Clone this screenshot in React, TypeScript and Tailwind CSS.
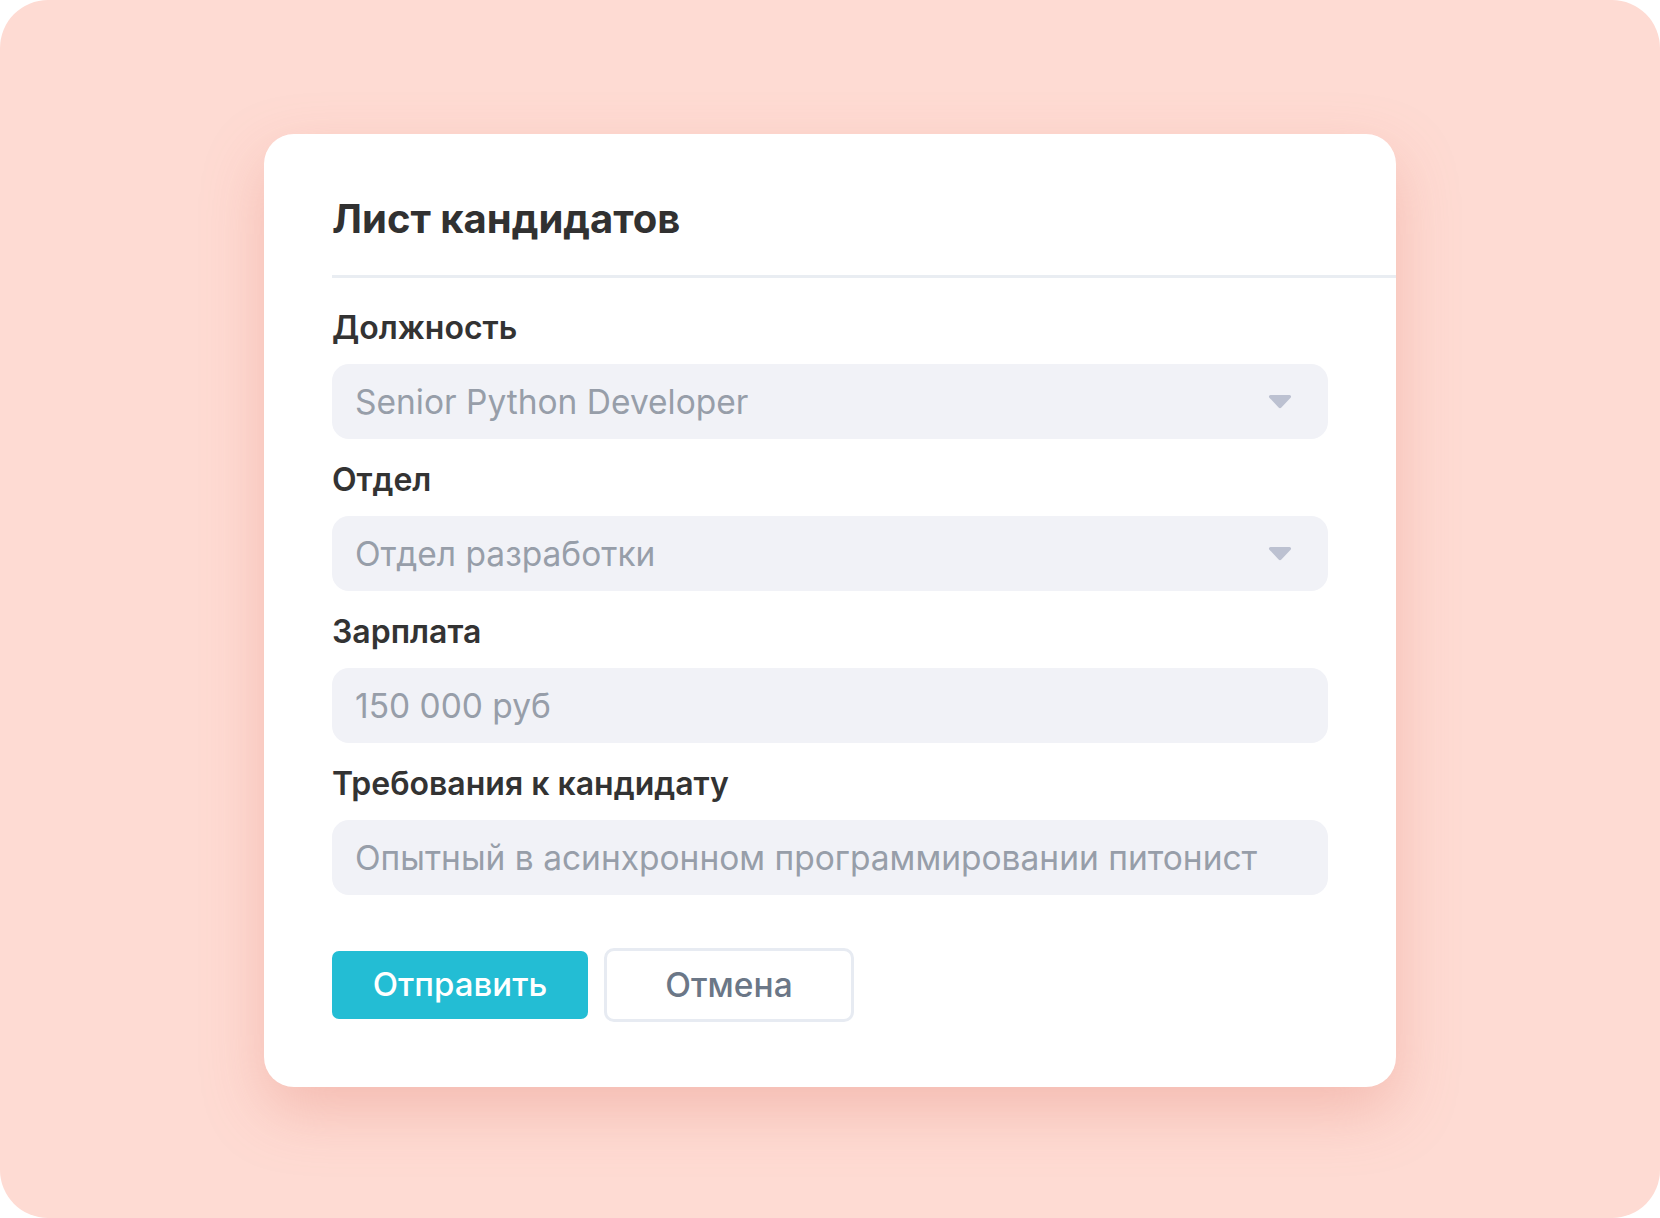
import React from 'react';

const fields = [
  { label: 'Должность', value: 'Senior Python Developer', select: true },
  { label: 'Отдел', value: 'Отдел разработки', select: true },
  { label: 'Зарплата', value: '150 000 руб', select: false },
  { label: 'Требования к кандидату', value: 'Опытный в асинхронном программировании питонист', select: false },
];

function Caret() {
  return (
    <svg width="24" height="15" viewBox="0 0 24 15" className="shrink-0">
      <path d="M2.6 1h18.8a1.6 1.6 0 0 1 1.2 2.7l-9.2 9.8a1.9 1.9 0 0 1-2.8 0L1.4 3.7A1.6 1.6 0 0 1 2.6 1z" fill="#bcc1d1" />
    </svg>
  );
}

function Field({ label, value, select }: { label: string; value: string; select: boolean }) {
  return (
    <div className="flex flex-col gap-[18px]">
      <div className="text-[32px] leading-[36px] font-semibold text-[#333333]">{label}</div>
      <div className="flex h-[75px] items-center justify-between rounded-[17px] bg-[#f1f2f7] pl-[23px] pr-[36px]">
        <span className="text-[33.5px] leading-[40px] text-[#979ea9]">{value}</span>
        {select && <Caret />}
      </div>
    </div>
  );
}

export default function App() {
  return (
    <div className="h-[1218px] w-[1660px] bg-white font-['Inter',sans-serif]">
      <div className="flex h-full w-full items-start justify-center rounded-[48px] bg-[#fedbd3] pt-[134px]">
        <div className="w-[1132px] rounded-[30px] bg-white pb-[65px] pl-[68px] pt-[61px] shadow-[0_24px_60px_rgba(225,130,115,0.35)]">
          <h1 className="text-[40px] leading-[48px] font-bold text-[#313131]">Лист кандидатов</h1>
          <div className="mt-[32px] h-[3px] bg-[#e9edf2]" />
          <div className="mt-[32px] flex flex-col gap-[23px] pr-[68px]">
            {fields.map((f) => (
              <Field key={f.label} {...f} />
            ))}
          </div>
          <div className="mt-[53px] flex items-center gap-[16px]">
            <button className="h-[68px] w-[256px] rounded-[7px] bg-[#23bdd4] text-[33px] font-medium text-white">
              Отправить
            </button>
            <button className="h-[74px] w-[250px] rounded-[10px] border-[3px] border-[#e7ebf2] bg-white text-[33.5px] font-medium text-[#6b7787]">
              Отмена
            </button>
          </div>
        </div>
      </div>
    </div>
  );
}
